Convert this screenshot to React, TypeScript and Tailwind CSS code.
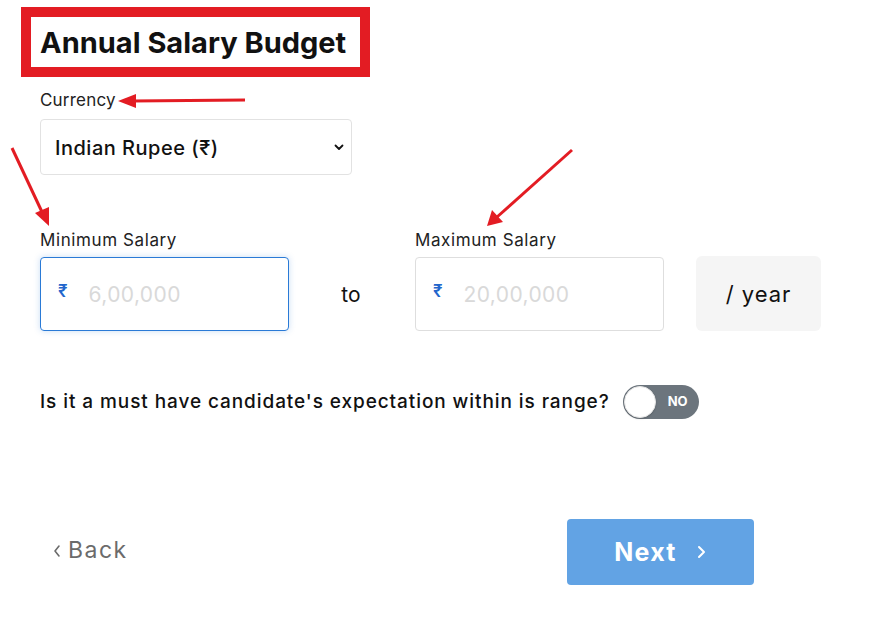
import React from "react";

export default function App() {
  const font = { fontFamily: "Inter, 'Noto Sans', sans-serif" };
  return (
    <div className="relative w-[888px] h-[622px] bg-white text-[#111]" style={font}>
      {/* Heading with red annotation box */}
      <div className="pt-[7px] pl-[21px]">
        <div className="w-[349px] h-[70px] border-[10px] border-[#e31c23] flex items-center pl-[9px]">
          <h1 className="text-[29px] font-bold leading-none tracking-[0px] text-[#111]">Annual Salary Budget</h1>
        </div>
      </div>

      <div className="pl-[40px]">
        <div className="mt-[13px] text-[17px] leading-[20px] tracking-[0.2px] text-[#222]">Currency</div>
        <div className="mt-[9px] w-[312px] h-[56px] border border-[#e2e2e2] rounded-[4px] flex items-center justify-between pl-[14px] pr-[6px]">
          <span className="text-[20px] font-medium tracking-[0.5px] text-[#111] mt-[2px]">Indian Rupee (₹)</span>
          <svg width="12" height="12" viewBox="0 0 12 12">
            <path d="M2.5 4.5 L6 8 L9.5 4.5" fill="none" stroke="#111" strokeWidth="1.8" strokeLinecap="round" strokeLinejoin="round" />
          </svg>
        </div>

        <div className="mt-[55px] flex items-end">
          <div className="flex flex-col w-[249px]">
            <div className="text-[17px] leading-[20px] tracking-[0.6px] text-[#222] mb-[7px]">Minimum Salary</div>
            <div className="h-[74px] border border-[#2a7ad6] rounded-[4px] flex items-center pl-[17px] shadow-[0_0_6px_rgba(42,122,214,0.25)]">
              <span className="text-[17px] font-semibold text-[#2266cc] -mt-[4px]">₹</span>
              <span className="ml-[21px] mt-[2px] text-[21px] tracking-[0.4px] text-[#d9d9d9]">6,00,000</span>
            </div>
          </div>
          <div className="w-[126px] h-[74px] flex items-center justify-center">
            <span className="text-[21px] text-[#111] -ml-[2px] mt-[2px]">to</span>
          </div>
          <div className="flex flex-col w-[249px]">
            <div className="text-[17px] leading-[20px] tracking-[0.6px] text-[#222] mb-[7px]">Maximum Salary</div>
            <div className="h-[74px] border border-[#dedede] rounded-[4px] flex items-center pl-[17px]">
              <span className="text-[17px] font-semibold text-[#2266cc] -mt-[4px]">₹</span>
              <span className="ml-[21px] mt-[2px] text-[21px] tracking-[0.4px] text-[#d9d9d9]">20,00,000</span>
            </div>
          </div>
          <div className="ml-[32px] w-[125px] h-[75px] bg-[#f5f5f5] rounded-[6px] flex items-center justify-center">
            <span className="text-[22px] tracking-[1px] text-[#111] mt-[2px]">/ year</span>
          </div>
        </div>

        <div className="mt-[54px] flex items-center">
          <span className="text-[19px] font-medium tracking-[0.92px] text-[#111]">Is it a must have candidate's expectation within is range?</span>
          <div className="ml-[13px] w-[76px] h-[34px] rounded-full bg-[#6c757d] relative flex items-center justify-end pr-[11px]">
            <div className="absolute left-[1px] top-[1px] w-[32px] h-[32px] rounded-full bg-white border border-[#e5e5e5] shadow-[0_1px_2px_rgba(0,0,0,0.15)]" />
            <span className="text-[13px] font-bold text-white">NO</span>
          </div>
        </div>

        <div className="mt-[100px] flex items-center">
          <div className="w-[527px] flex items-center pl-[12px] text-[#6b6b6b] -mt-[3px]">
            <svg width="10" height="16" viewBox="0 0 10 16" className="mr-[6px]">
              <path d="M7 3 L3 8 L7 13" fill="none" stroke="#6b6b6b" strokeWidth="1.6" strokeLinecap="round" strokeLinejoin="round" />
            </svg>
            <span className="text-[23px] tracking-[1.5px]">Back</span>
          </div>
          <button className="w-[187px] h-[66px] bg-[#62a3e4] rounded-[4px] flex items-center justify-center text-white">
            <span className="text-[25px] font-bold tracking-[1.2px] mt-[2px]">Next</span>
            <svg width="12" height="18" viewBox="0 0 12 18" className="ml-[18px]">
              <path d="M4 4 L9 9 L4 14" fill="none" stroke="#fff" strokeWidth="2" strokeLinecap="round" strokeLinejoin="round" />
            </svg>
          </button>
        </div>
      </div>

      {/* Red annotation arrows */}
      <svg className="absolute inset-0 pointer-events-none" width="888" height="622" viewBox="0 0 888 622">
        <g stroke="#e31c23" strokeWidth="3" fill="#e31c23">
          <line x1="245" y1="100" x2="132" y2="101" />
          <polygon points="118,101 136,94 136,108" stroke="none" />
          <line x1="12" y1="148" x2="42" y2="212" />
          <polygon points="49,226 35,213 49,207" stroke="none" />
          <line x1="572" y1="150" x2="497" y2="217" />
          <polygon points="487,226 492,210 503,222" stroke="none" />
        </g>
      </svg>
    </div>
  );
}
